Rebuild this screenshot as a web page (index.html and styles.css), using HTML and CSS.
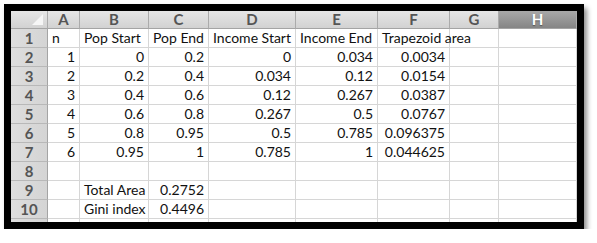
FILE: index.html
```html
<!DOCTYPE html>
<html>
<head>
<meta charset="utf-8">
<link rel="stylesheet" href="styles.css">
</head>
<body>
<div class="frame">
  <table class="sheet">
    <colgroup>
      <col class="c-rh"><col class="c-a"><col class="c-b"><col class="c-c"><col class="c-d"><col class="c-e"><col class="c-f"><col class="c-g"><col class="c-h">
    </colgroup>
    <thead>
      <tr>
        <th class="corner"><span class="tri"></span></th>
        <th class="ch">A</th><th class="ch">B</th><th class="ch">C</th><th class="ch">D</th><th class="ch">E</th><th class="ch">F</th><th class="ch">G</th><th class="ch sel">H</th>
      </tr>
    </thead>
    <tbody>
      <tr><th class="rh">1</th><td>n</td><td>Pop Start</td><td>Pop End</td><td>Income Start</td><td>Income End</td><td class="ov">Trapezoid area</td><td></td><td></td></tr>
      <tr><th class="rh">2</th><td class="n">1</td><td class="n">0</td><td class="n">0.2</td><td class="n">0</td><td class="n">0.034</td><td class="n">0.0034</td><td></td><td></td></tr>
      <tr><th class="rh">3</th><td class="n">2</td><td class="n">0.2</td><td class="n">0.4</td><td class="n">0.034</td><td class="n">0.12</td><td class="n">0.0154</td><td></td><td></td></tr>
      <tr><th class="rh">4</th><td class="n">3</td><td class="n">0.4</td><td class="n">0.6</td><td class="n">0.12</td><td class="n">0.267</td><td class="n">0.0387</td><td></td><td></td></tr>
      <tr><th class="rh">5</th><td class="n">4</td><td class="n">0.6</td><td class="n">0.8</td><td class="n">0.267</td><td class="n">0.5</td><td class="n">0.0767</td><td></td><td></td></tr>
      <tr><th class="rh">6</th><td class="n">5</td><td class="n">0.8</td><td class="n">0.95</td><td class="n">0.5</td><td class="n">0.785</td><td class="n">0.096375</td><td></td><td></td></tr>
      <tr><th class="rh">7</th><td class="n">6</td><td class="n">0.95</td><td class="n">1</td><td class="n">0.785</td><td class="n">1</td><td class="n">0.044625</td><td></td><td></td></tr>
      <tr><th class="rh">8</th><td></td><td></td><td></td><td></td><td></td><td></td><td></td><td></td></tr>
      <tr><th class="rh">9</th><td></td><td>Total Area</td><td class="n">0.2752</td><td></td><td></td><td></td><td></td><td></td></tr>
      <tr><th class="rh">10</th><td></td><td>Gini index</td><td class="n">0.4496</td><td></td><td></td><td></td><td></td><td></td></tr>
      <tr><th class="rh">11</th><td></td><td></td><td></td><td></td><td></td><td></td><td></td><td></td></tr>
    </tbody>
  </table>
</div>
</body>
</html>
```

FILE: styles.css
```css
html, body {
  margin: 0;
  padding: 0;
  background: #ffffff;
}

.frame {
  margin: 4px 0 0 4px;
  width: 566px;
  height: 211px;
  border: 7px solid #000000;
  overflow: hidden;
  background: #ffffff;
  box-shadow: 3px 4px 5px rgba(0, 0, 0, 0.45);
}

.sheet {
  border-collapse: separate;
  border-spacing: 0;
  table-layout: fixed;
  width: 566px;
  font-family: Lato, "Open Sans", "Liberation Sans", sans-serif;
  font-size: 14px;
  color: #111111;
}

.c-rh { width: 37px; }
.c-a { width: 32px; }
.c-b { width: 69px; }
.c-c { width: 60px; }
.c-d { width: 87px; }
.c-e { width: 82px; }
.c-f { width: 72px; }
.c-g { width: 49px; }
.c-h { width: 78px; }

.sheet th,
.sheet td {
  box-sizing: border-box;
  padding: 0 4px;
  height: 19px;
  line-height: 18px;
  white-space: nowrap;
  overflow: visible;
}

.sheet td {
  border-right: 1px solid #d6d6d6;
  border-bottom: 1px solid #d6d6d6;
  text-align: left;
}

.sheet td.n {
  text-align: right;
}

.sheet td.ov {
  overflow: visible;
  position: relative;
  z-index: 1;
}

.sheet thead th {
  height: 18px;
  line-height: 17px;
}

.ch {
  background: linear-gradient(#e6e6e6, #d2d2d2);
  border-right: 1px solid #ababab;
  border-bottom: 1px solid #a4a4a4;
  color: #555555;
  font-weight: bold;
  font-size: 15px;
  text-align: center;
}

.ch.sel {
  background: linear-gradient(#a8a8a8, #858585);
  color: #ffffff;
  text-shadow: 0 1px 1px rgba(0, 0, 0, 0.4);
}

.corner {
  background: linear-gradient(#e6e6e6, #d2d2d2);
  border-right: 1px solid #ababab;
  border-bottom: 1px solid #a4a4a4;
  position: relative;
}

.tri {
  position: absolute;
  right: 4px;
  bottom: 3px;
  width: 0;
  height: 0;
  border-left: 11px solid transparent;
  border-bottom: 11px solid #f6f6f6;
}

.rh {
  background: linear-gradient(90deg, #dedede, #d4d4d4);
  border-right: 1px solid #a4a4a4;
  border-bottom: 1px solid #b8b8b8;
  color: #555555;
  font-weight: bold;
  font-size: 15px;
  text-align: center;
}
```
